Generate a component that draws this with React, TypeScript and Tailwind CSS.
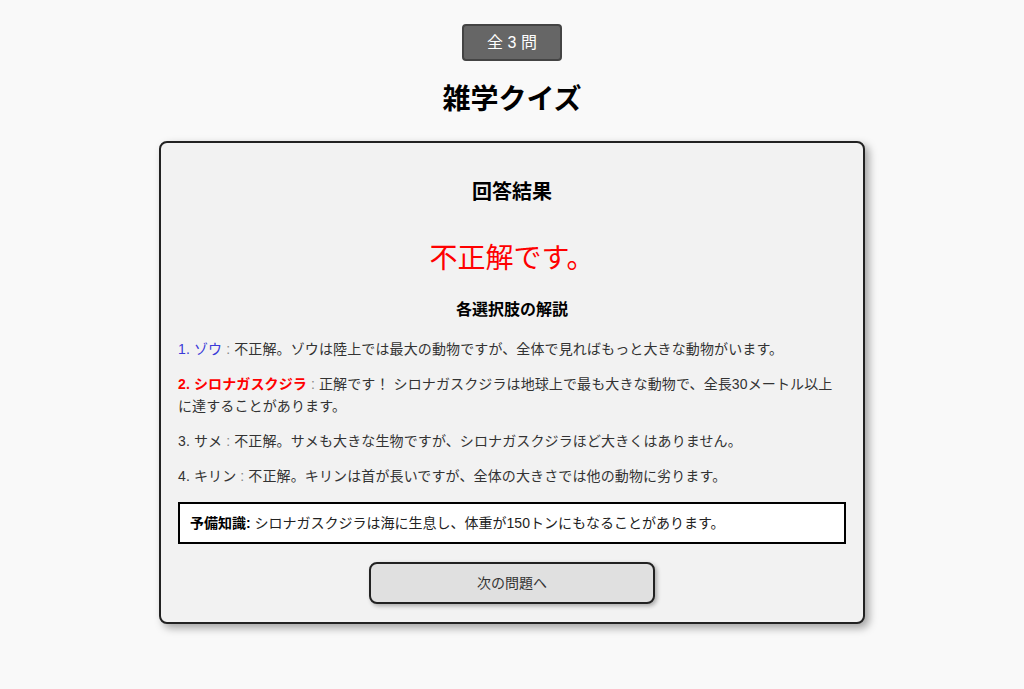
import React from 'react';

interface Choice {
  no: number;
  name: string;
  text: string;
  tone: 'picked' | 'answer' | 'plain';
}

const choices: Choice[] = [
  { no: 1, name: 'ゾウ', text: '不正解。ゾウは陸上では最大の動物ですが、全体で見ればもっと大きな動物がいます。', tone: 'picked' },
  { no: 2, name: 'シロナガスクジラ', text: '正解です！ シロナガスクジラは地球上で最も大きな動物で、全長30メートル以上に達することがあります。', tone: 'answer' },
  { no: 3, name: 'サメ', text: '不正解。サメも大きな生物ですが、シロナガスクジラほど大きくはありません。', tone: 'plain' },
  { no: 4, name: 'キリン', text: '不正解。キリンは首が長いですが、全体の大きさでは他の動物に劣ります。', tone: 'plain' },
];

const font = { fontFamily: '"Liberation Sans", "Noto Sans CJK JP", sans-serif' };

export default function App() {
  return (
    <div className="min-h-[689px] bg-[#f9f9f9] flex flex-col items-center pt-[24px] text-[#333]" style={font}>
      <div className="w-[100px] h-[37px] flex items-center justify-center bg-[#666] border-2 border-[#444] rounded-[4px] text-white text-[16px]">
        全 3 問
      </div>

      <h1 className="mt-[21px] text-[28px] leading-[36px] font-bold text-black">雑学クイズ</h1>

      {/* result card */}
      <div className="mt-[23px] w-[706px] bg-[#f2f2f2] border-2 border-[#222] rounded-[8px] shadow-[4px_4px_8px_rgba(0,0,0,0.35)] px-[17px] pt-[16px] pb-[18px] flex flex-col">
        <h2 className="mt-[19px] text-center text-[20px] leading-[28px] font-bold text-black">回答結果</h2>
        <p className="mt-[35px] text-center text-[28px] leading-[36px] text-[#f00]">不正解です。</p>
        <h3 className="mt-[21px] text-center text-[16px] leading-[24px] font-bold text-black">各選択肢の解説</h3>

        <div className="mt-[16px] flex flex-col gap-[13px] text-[14px] leading-[22px] tracking-[0.12px]">
          {choices.map((c) => (
            <p key={c.no}>
              <span
                className={
                  c.tone === 'picked'
                    ? 'text-[#3a3ad8]'
                    : c.tone === 'answer'
                    ? 'text-[#f00] font-bold'
                    : ''
                }
              >
                {c.no}. {c.name}
              </span>
              <span className="text-[#888]"> : </span>
              {c.text}
            </p>
          ))}
        </div>

        <div className="mt-[15px] bg-white border-2 border-black px-[10px] py-[8px] text-[14px] leading-[22px] text-[#222]">
          <span className="font-bold text-black">予備知識:</span> シロナガスクジラは海に生息し、体重が150トンにもなることがあります。
        </div>

        <button className="mt-[18px] self-center w-[286px] h-[42px] bg-[#e0e0e0] border-2 border-[#222] rounded-[8px] shadow-[2px_2px_4px_rgba(0,0,0,0.3)] text-[14px] text-[#333]">
          次の問題へ
        </button>
      </div>
    </div>
  );
}
